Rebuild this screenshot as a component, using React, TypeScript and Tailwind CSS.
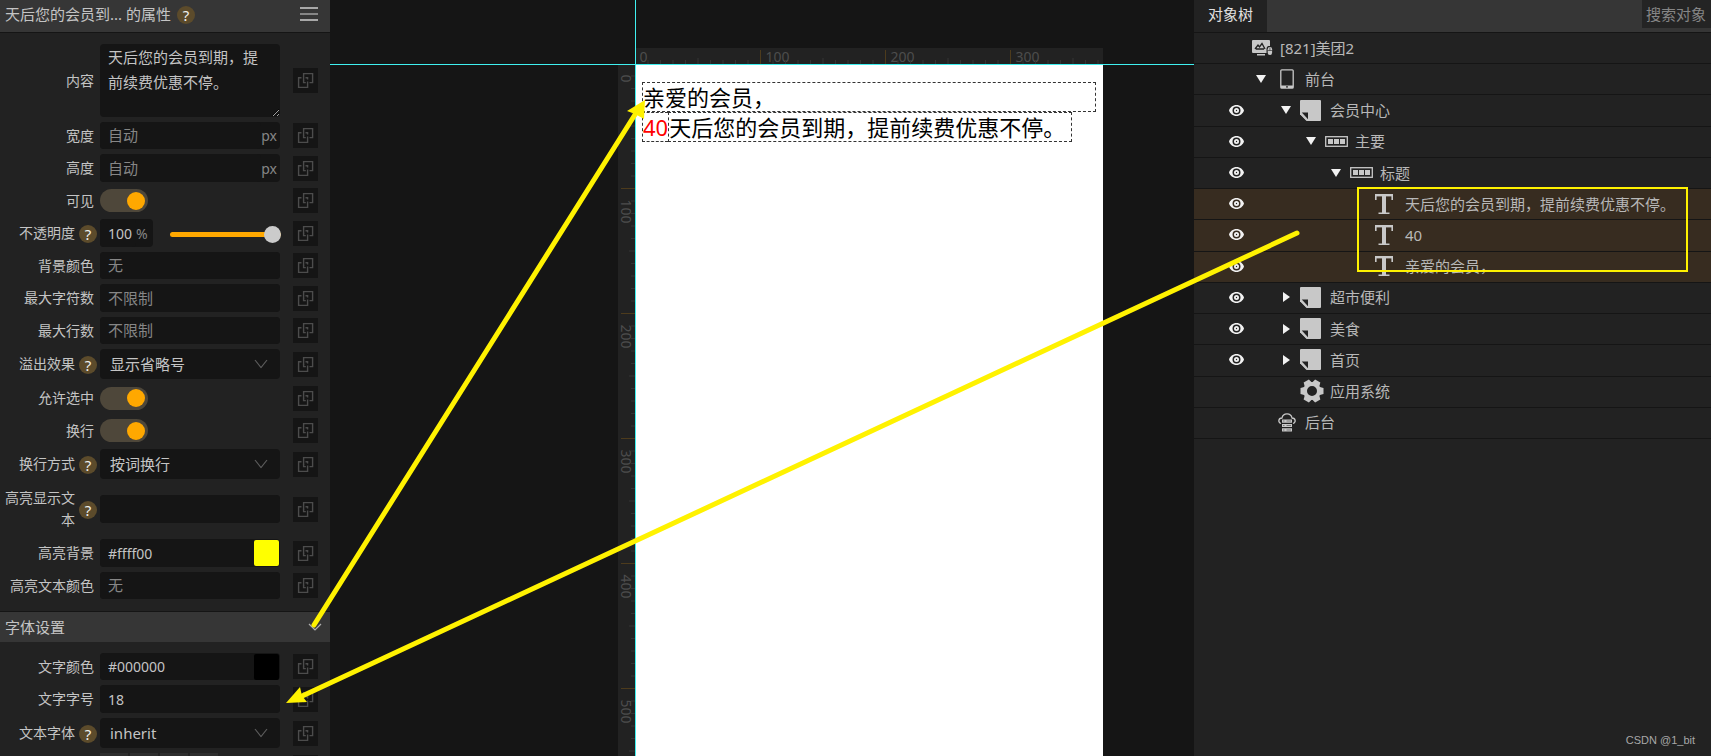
import { useState } from "react";
import type { ReactNode } from "react";

const FIELD = "rounded bg-[#151515] text-[#c4c4c4] placeholder:text-[15px] placeholder:text-[#868686] outline-none";

function HelpIcon() {
    return (
        <span className="mt-0.5 flex h-[18px] w-[18px] shrink-0 items-center justify-center rounded-full bg-[#5c4b2b] text-[15px] leading-none text-[#f0f0f0]">
            ?
        </span>
    );
}

function CopyButton({ label }: { label: string }) {
    return (
        <button type="button" aria-label={`绑定${label}`} className="ml-[13px] h-[25px] w-[25px] shrink-0 bg-[#151515]">
            <svg viewBox="0 0 25 25" className="h-[25px] w-[25px]" fill="none" stroke="#4c4c4c" strokeWidth="1.4">
                <path d="M8.5 9.7H5.6V19.4H14.6V13.6" />
                <path d="M14.6 11.5V9.7H12.5" />
                <path d="M10.6 12.5V5.6H19.6V14.6H16.5" />
                <path d="M10.6 12V14.6H12.8" />
            </svg>
        </button>
    );
}

type RowProps = {
    id: string;
    label: string;
    help?: boolean;
    className?: string;
    children: ReactNode;
};

function Row({ id, label, help, className = "h-7", children }: RowProps) {
    return (
        <div className={`flex items-center ${className}`}>
            <div className={`flex w-[100px] shrink-0 items-center justify-end gap-1 ${help ? "pr-[3px]" : "pr-1.5"}`}>
                <label htmlFor={id} className="text-right text-[14px] leading-[22px] text-[#c4c4c4]">
                    {label}
                </label>
                {help && <HelpIcon />}
            </div>
            <div className="flex h-full min-w-0 flex-1 items-center">{children}</div>
            <CopyButton label={label} />
        </div>
    );
}

function TextField({ id, value, placeholder, unit }: { id: string; value?: string; placeholder?: string; unit?: string }) {
    return (
        <div className={`flex h-full w-full items-center ${FIELD}`}>
            <input id={id} type="text" defaultValue={value} placeholder={placeholder} className={`h-full w-full min-w-0 flex-1 pl-2 text-[14px] ${FIELD}`} />
            {unit && <span className="pr-[3px] text-[14px] text-[#868686]">{unit}</span>}
        </div>
    );
}

function ColorField({ id, value }: { id: string; value: string }) {
    return (
        <div className={`flex h-full w-full items-center pr-px ${FIELD}`}>
            <input id={id} type="text" defaultValue={value} className={`h-full w-full min-w-0 flex-1 pl-2 text-[14px] ${FIELD}`} />
            <button type="button" aria-label={value} className="h-[26px] w-[25px] shrink-0 rounded-xs" style={{ backgroundColor: value }} />
        </div>
    );
}

function SelectField({ id, value }: { id: string; value: string }) {
    return (
        <div className="relative h-full w-full">
            <select id={id} className={`h-full w-full appearance-none pl-2.5 text-[15px] ${FIELD}`}>
                <option>{value}</option>
            </select>
            <svg viewBox="0 0 14 9" className="pointer-events-none absolute top-1/2 right-3 h-[9px] w-[14px] -translate-y-1/2" fill="none" stroke="#5c5c5c" strokeWidth="1.2">
                <path d="M1 .5L7 8L13 .5" />
            </svg>
        </div>
    );
}

function Switch({ id }: { id: string }) {
    return (
        <input
            id={id}
            type="checkbox"
            defaultChecked
            className="flex h-[23px] w-12 appearance-none items-center rounded-full bg-[#3a3a3a] px-[3px] before:h-[18px] before:w-[18px] before:rounded-full before:bg-[#888] before:content-[''] checked:justify-end checked:bg-[#4e473a] checked:before:bg-[#ffa800]"
        />
    );
}

function OpacityField() {
    const [opacity, setOpacity] = useState(100);
    return (
        <>
            <div className={`flex h-full w-[53px] shrink-0 items-center ${FIELD}`}>
                <input
                    id="opacity"
                    type="text"
                    value={opacity}
                    onChange={(e) => setOpacity(Number(e.target.value) || 0)}
                    className={`h-full w-9 pl-2 text-[14px] ${FIELD}`}
                />
                <span className="text-[14px] text-[#868686]">%</span>
            </div>
            <input
                type="range"
                aria-label="不透明度"
                value={opacity}
                onChange={(e) => setOpacity(Number(e.target.value))}
                className="mt-0.5 -mr-px ml-[17px] h-[5px] min-w-0 flex-1 appearance-none rounded-full bg-[#ffa800] [&::-webkit-slider-thumb]:h-[17px] [&::-webkit-slider-thumb]:w-[17px] [&::-webkit-slider-thumb]:appearance-none [&::-webkit-slider-thumb]:rounded-full [&::-webkit-slider-thumb]:bg-[#cbcbcb]"
            />
        </>
    );
}

function PropertyPanel() {
    return (
        <aside className="h-full w-[330px] shrink-0 overflow-hidden bg-[#222]">
            <header className="flex h-[33px] items-center border-b border-[#151515] bg-[#363636] pr-3 pb-1 pl-[5px]">
                <h2 className="mr-1.5 text-[15px] text-[#c4c4c4]">天后您的会员到... 的属性</h2>
                <HelpIcon />
                <button type="button" aria-label="菜单" className="ml-auto">
                    <svg viewBox="0 0 18 14" className="h-[14px] w-[18px]" stroke="#a8a8a8">
                        <path d="M0 1H18M0 13H18" strokeWidth="2" />
                        <path d="M0 7H18" strokeWidth="1.4" />
                    </svg>
                </button>
            </header>

            {/* basic properties */}
            <div className="flex flex-col gap-[5px] pt-[11px] pr-3 pb-3">
                <Row id="content" label="内容" className="h-[73px]">
                    <textarea id="content" className={`h-full w-full resize-y px-2 pt-px text-[15px] leading-[25px] ${FIELD}`} defaultValue="天后您的会员到期，提前续费优惠不停。" />
                </Row>
                <Row id="width" label="宽度" className="h-[27px]"><TextField id="width" placeholder="自动" unit="px" /></Row>
                <Row id="height" label="高度"><TextField id="height" placeholder="自动" unit="px" /></Row>
                <Row id="visible" label="可见" className="h-[27px]"><Switch id="visible" /></Row>
                <Row id="opacity" label="不透明度" help><OpacityField /></Row>
                <Row id="bg" label="背景颜色" className="h-[27px]"><TextField id="bg" placeholder="无" /></Row>
                <Row id="maxchars" label="最大字符数"><TextField id="maxchars" placeholder="不限制" /></Row>
                <Row id="maxlines" label="最大行数" className="h-[27px]"><TextField id="maxlines" placeholder="不限制" /></Row>
                <Row id="overflow" label="溢出效果" help className="h-[30px]"><SelectField id="overflow" value="显示省略号" /></Row>
                <Row id="selectable" label="允许选中"><Switch id="selectable" /></Row>
                <Row id="wrap" label="换行" className="h-[27px]"><Switch id="wrap" /></Row>
                <Row id="wrapmode" label="换行方式" help className="h-[30px]"><SelectField id="wrapmode" value="按词换行" /></Row>
                <Row id="hltext" label="高亮显示文本" help className="h-[50px] py-[11px]"><TextField id="hltext" /></Row>
                <Row id="hlbg" label="高亮背景"><ColorField id="hlbg" value="#ffff00" /></Row>
                <Row id="hlcolor" label="高亮文本颜色" className="h-[27px]"><TextField id="hlcolor" placeholder="无" /></Row>
            </div>

            {/* font settings */}
            <header className="flex h-[31px] items-center justify-between border-t border-[#151515] bg-[#363636] pr-2 pl-[5px]">
                <h2 className="text-[15px] text-[#c4c4c4]">字体设置</h2>
                <button type="button" aria-label="收起">
                    <svg viewBox="0 0 14 8" className="h-2 w-[14px]" fill="none" stroke="#b0b0b0" strokeWidth="1.2">
                        <path d="M1 1L7 7L13 1" />
                    </svg>
                </button>
            </header>
            <div className="flex flex-col gap-[5px] pt-[11px] pr-3">
                <Row id="color" label="文字颜色" className="h-[27px]"><ColorField id="color" value="#000000" /></Row>
                <Row id="size" label="文字字号"><TextField id="size" value="18" /></Row>
                <Row id="family" label="文本字体" help className="h-[30px]"><SelectField id="family" value="inherit" /></Row>
                <div className="flex h-7 items-center">
                    <div className="flex h-full flex-1 gap-0.5 pl-[100px]">
                        <button type="button" aria-label="粗体" className="w-7 bg-[#2d2d2d]" />
                        <button type="button" aria-label="斜体" className="w-7 bg-[#2d2d2d]" />
                        <button type="button" aria-label="下划线" className="w-7 bg-[#2d2d2d]" />
                        <button type="button" aria-label="删除线" className="w-7 bg-[#2d2d2d]" />
                    </div>
                    <CopyButton label="文字样式" />
                </div>
            </div>
        </aside>
    );
}

// rulers run at 1.25 screen pixels per unit, one tick every 10 units
const H_TICKS = Array.from({ length: 38 }, (_, i) => i);
const V_TICKS = Array.from({ length: 56 }, (_, i) => i);

function tickLength(i: number) {
    if (i % 10 === 0) return 14;
    return i % 5 === 0 ? 6 : 4;
}

function RulerScale({ vertical }: { vertical?: boolean }) {
    return (
        <>
            {(vertical ? V_TICKS : H_TICKS).map((i) => {
                const at = i * 12.5 - (vertical ? 1.5 : 0.5);
                const size = vertical ? 17 : 16;
                const start = size - tickLength(i);
                const major = i % 10 === 0;
                return (
                    <g key={i}>
                        {i > 0 && (
                            <path d={vertical ? `M${start} ${at}H${size}` : `M${at} ${start}V${size}`} stroke={major ? "#4d3b1c" : "#343434"} />
                        )}
                        {major && (
                            <text
                                fontSize="14"
                                fill="#4d4d4d"
                                transform={vertical ? `translate(3 ${at + 11}) rotate(90)` : `translate(${at + (i ? 5 : 4)} 14)`}
                            >
                                {i * 10}
                            </text>
                        )}
                    </g>
                );
            })}
        </>
    );
}

function Canvas() {
    return (
        <main className="grid h-full min-w-0 flex-1 grid-cols-[288fr_17px_1px_467px_91fr] grid-rows-[48px_16px_1px_minmax(0,1fr)] overflow-hidden bg-[#151515]">
            <svg className="col-start-4 row-start-2 h-full w-full overflow-visible bg-[#222]" aria-label="水平标尺">
                <RulerScale />
            </svg>
            <svg className="col-start-2 row-start-4 h-full w-full overflow-visible bg-[#222]" aria-label="垂直标尺">
                <RulerScale vertical />
            </svg>

            {/* page */}
            <div className="col-start-4 row-start-4 bg-white pt-[17px] pr-[7px] pl-1.5 text-[22px] leading-7 text-black">
                <p className="h-[30px] border border-dashed border-[#333]">亲爱的会员，</p>
                <div className="flex">
                    <span className="h-[30px] border-y border-l border-dashed border-[#333] text-[#ff0000]">40</span>
                    <span className="h-[30px] border border-dashed border-[#333] pr-1.5 whitespace-nowrap">
                        天后您的会员到期，提前续费优惠不停。
                    </span>
                </div>
            </div>

            {/* guides */}
            <div className="col-span-full col-start-1 row-start-3 bg-[#3ff0f0]" />
            <div className="col-start-3 row-span-full row-start-1 bg-[#3ff0f0]" />
        </main>
    );
}

function EyeIcon() {
    return (
        <svg viewBox="0 0 15 11" className="h-[11px] w-[15px]">
            <path fill="#f2f2f2" fillRule="evenodd" d="M7.5 0C3.8 0 1.1 2.4 0 5.5C1.1 8.6 3.8 11 7.5 11S13.9 8.6 15 5.5C13.9 2.4 11.2 0 7.5 0ZM7.5 1.5A4 4 0 1 1 7.5 9.5A4 4 0 1 1 7.5 1.5Z" />
            <circle cx="7.5" cy="5.5" r="2.5" fill="#f2f2f2" />
            <circle cx="7.5" cy="5.5" r=".7" fill="#222" />
        </svg>
    );
}

type IconName = "project" | "phone" | "page" | "box" | "text" | "gear" | "server";

const GEAR_TEETH = [0, 60, 120, 180, 240, 300];

function NodeIcon({ name }: { name: IconName }) {
    switch (name) {
        case "project":
            return (
                <svg viewBox="-2 0 24 16" className="h-4 w-6">
                    <path fill="#c8c8c8" d="M1 0H17Q18 0 18 1V6H16Q14.500 7 14.500 9V13H1Q0 13 0 12V1Q0 0 1 0ZM5 14H13V15.500H5Z" />
                    <path fill="none" stroke="#222" strokeWidth="1.300" d="M3 9L6 5L7.500 7L10 3.500L13 9M4 9H12" />
                    <rect x="15.700" y="7" width="4.400" height="8" rx="2.200" fill="#c8c8c8" />
                    <path stroke="#222" strokeWidth=".6" d="M17.900 7.500V10.500M15.700 10.500H20" />
                </svg>
            );
        case "phone":
            return (
                <svg viewBox="-5 0 24 20" className="h-5 w-6">
                    <rect x=".8" y=".8" width="12.4" height="18.4" rx="1" fill="#222" stroke="#c8c8c8" strokeWidth="1.3" />
                    <path fill="#c8c8c8" d="M1 16.500H13V19H1Z" />
                    <rect x="6" y="17.300" width="2" height="1.200" fill="#222" />
                </svg>
            );
        case "page":
            return (
                <svg viewBox="0 0 21 21" className="h-[21px] w-[21px]">
                    <path fill="#c8c8c8" d="M1 0H20Q21 0 21 1V20Q21 21 20 21H7L0 14V1Q0 0 1 0Z" />
                    <path fill="#222" d="M1.800 12.500H8V19.200Z" />
                    <path fill="none" stroke="#c8c8c8" strokeWidth="1.200" d="M0 13.500L7 20.500" />
                </svg>
            );
        case "box":
            return (
                <svg viewBox="0 0 23 11" className="h-[11px] w-[23px]">
                    <rect x=".7" y=".7" width="21.6" height="9.6" fill="none" stroke="#c8c8c8" strokeWidth="1.3" />
                    <path fill="#c8c8c8" d="M3 3H8V8H3ZM9 3H14V8H9ZM15 3H20V8H15Z" />
                </svg>
            );
        case "text":
            return (
                <svg viewBox="0 0 18 20" className="h-5 w-[18px]" fill="none" stroke="#c8c8c8">
                    <path strokeWidth="2.4" d="M0 1.200H18" />
                    <path strokeWidth="1.6" d="M.8 0V6M17.200 0V6M3.500 19.200H14.500" />
                    <path strokeWidth="4" d="M9 1V19" />
                </svg>
            );
        case "gear":
            return (
                <svg viewBox="-12 -12 24 24" className="h-6 w-6" fill="none" stroke="#c8c8c8">
                    <circle r="7" strokeWidth="4" />
                    {GEAR_TEETH.map((a) => (
                        <path key={a} fill="#c8c8c8" stroke="none" d="M7 -4.200L11.500 -3V3L7 4.200Z" transform={`rotate(${a})`} />
                    ))}
                </svg>
            );
        case "server":
            return (
                <svg viewBox="-3 0 24 19" className="h-[19px] w-6">
                    <path fill="none" stroke="#c8c8c8" strokeWidth="1.300" d="M3 10.500C-.2 9.500 .2 5.200 4 5C5 -.5 13 -.5 14 5C17.800 5.200 18.200 9.500 15 10.500" />
                    <path fill="#c8c8c8" d="M4 6.500H14V9.700H4ZM4 11H14V14H4ZM4 15.300H14V18.500H4Z" />
                    <path stroke="#222" d="M5 8H6.500M5 12.500H6.500M5 17H6.500M8.500 8H13M8.500 12.500H13M8.500 17H13" strokeWidth=".5" />
                </svg>
            );
    }
}

type TreeNode = {
    label: string;
    icon: IconName;
    depth: number;
    open?: boolean;
    eye?: boolean;
    selected?: boolean;
};

const NODES: TreeNode[] = [
    { label: "[821]美团2", icon: "project", depth: 0 },
    { label: "前台", icon: "phone", depth: 1, open: true },
    { label: "会员中心", icon: "page", depth: 2, open: true, eye: true },
    { label: "主要", icon: "box", depth: 3, open: true, eye: true },
    { label: "标题", icon: "box", depth: 4, open: true, eye: true },
    { label: "天后您的会员到期，提前续费优惠不停。", icon: "text", depth: 5, eye: true, selected: true },
    { label: "40", icon: "text", depth: 5, eye: true, selected: true },
    { label: "亲爱的会员，", icon: "text", depth: 5, eye: true, selected: true },
    { label: "超市便利", icon: "page", depth: 2, open: false, eye: true },
    { label: "美食", icon: "page", depth: 2, open: false, eye: true },
    { label: "首页", icon: "page", depth: 2, open: false, eye: true },
    { label: "应用系统", icon: "gear", depth: 2 },
    { label: "后台", icon: "server", depth: 1 },
];

function TreeRow({ node }: { node: TreeNode }) {
    return (
        <li className={`flex items-center border-b border-[#151515] pb-px ${node.selected ? "bg-[#372c20]" : ""}`}>
            <div className="flex w-14 shrink-0 justify-end pr-1.5">
                {node.eye && <button type="button" aria-label="显示或隐藏"><EyeIcon /></button>}
            </div>
            <div className="flex shrink-0 justify-end" style={{ width: node.depth * 25 }}>
                {node.open !== undefined && (
                    <button type="button" aria-label={node.open ? "折叠" : "展开"} className="mr-[9px]">
                        <svg viewBox="0 0 10 10" className="h-2.5 w-2.5" fill="#f2f2f2">
                            <path d={node.open ? "M0 1H10L5 9Z" : "M2 0L9 5L2 10Z"} />
                        </svg>
                    </button>
                )}
            </div>
            <span className="mr-1.5 flex w-6 shrink-0"><NodeIcon name={node.icon} /></span>
            <span className="text-[15px] leading-5 whitespace-nowrap text-[#b8b8b8]">{node.label}</span>
        </li>
    );
}

function ObjectTree() {
    return (
        <aside className="h-full w-[517px] shrink-0 overflow-hidden bg-[#222]">
            <header className="flex h-[33px] border-b border-[#151515] bg-[#363636]">
                <h2 className="flex w-[73px] items-center justify-center bg-[#222] pb-1 text-[15px] text-[#e0e0e0]">对象树</h2>
                <input
                    type="text"
                    aria-label="搜索对象"
                    placeholder="搜索对象"
                    className="ml-auto h-7 w-[69px] bg-[#242424] pl-1 text-[15px] text-[#c4c4c4] outline-none placeholder:text-[#868686]"
                />
            </header>
            <ul className="grid h-[406px] auto-rows-fr">
                {NODES.map((node) => (
                    <TreeRow key={node.label} node={node} />
                ))}
            </ul>
        </aside>
    );
}

function Annotations() {
    return (
        <svg className="pointer-events-none absolute top-0 left-0 h-full w-full" fill="none" stroke="#fff200">
            <g strokeWidth="5" strokeLinecap="round">
                <path d="M314 625L636 113" />
                <path d="M1297 233L300 697" />
            </g>
            <g fill="#fff200" stroke="none">
                <path d="M645 100L627 111L635 114L644 119Z" />
                <path d="M286 703L300 687L302 696L307 702Z" />
            </g>
            <rect x="1358" y="188" width="329" height="83" strokeWidth="2" />
        </svg>
    );
}

export default function App() {
    return (
        <div className="relative flex h-screen w-full overflow-hidden bg-[#151515] font-['Noto_Sans','Noto_Sans_CJK_SC',sans-serif]">
            <PropertyPanel />
            <Canvas />
            <ObjectTree />
            <Annotations />
            <p className="absolute right-4 bottom-2 font-['Liberation_Sans',sans-serif] text-[11px] leading-4 text-[#a8a8a8]">CSDN @1_bit</p>
        </div>
    );
}
